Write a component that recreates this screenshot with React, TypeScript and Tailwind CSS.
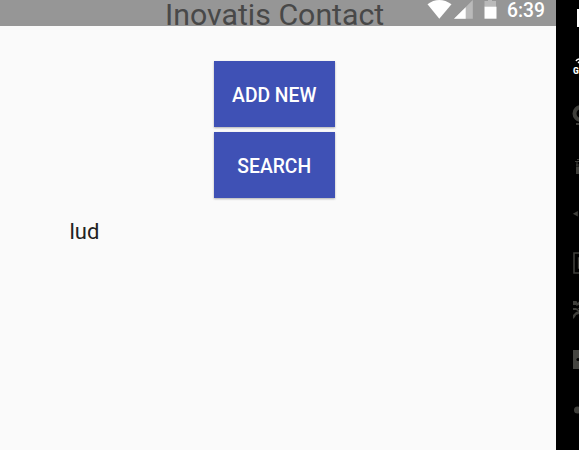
import type { ReactNode } from "react";

function ToolSlot({ children }: { children: ReactNode }) {
  return (
    <svg className="block h-[50px] w-[23px] shrink-0" viewBox="0 0 23 50" fill="none">
      {children}
    </svg>
  );
}

function EmulatorToolbar() {
  return (
    <aside className="flex h-full w-[23px] shrink-0 flex-col overflow-hidden bg-black">
      <ToolSlot>
        <path d="M21 9h6v18h-6z" fill="#fff" />
      </ToolSlot>
      <div className="flex h-[50px] w-[23px] shrink-0 flex-col overflow-hidden pl-[17px] pt-2">
        <svg className="h-[8px] w-[6px] shrink-0" viewBox="0 0 6 8" fill="none">
          <path d="M3 3q1-2 4-2M5 5l1.500-1.500" stroke="#fff" strokeWidth="1.4" />
        </svg>
        <span className="whitespace-nowrap text-[8.500px] font-black leading-[10px] text-white">G</span>
      </div>
      <ToolSlot>
        <circle cx="25" cy="13.500" r="6.500" stroke="#3f3f3b" strokeWidth="4" />
        <path d="M20 23h6v2h-6z" fill="#3f3f3b" />
      </ToolSlot>
      <ToolSlot>
        <path d="M19 11.500h4M20 15h3M21 11v5" stroke="#3f3f3b" strokeWidth="1.100" />
        <path d="M21 9h2v1h-2zM20 16.500h3v7.500h-3z" fill="#3f3f3b" />
      </ToolSlot>
      <ToolSlot>
        <path d="M16.800 13.800 21.800 11v5.500z" fill="#3f3f3b" />
      </ToolSlot>
      <ToolSlot>
        <path d="M18 3h14v20H18z" stroke="#3f3f3b" strokeWidth="1.600" />
        <path d="M22.500 8h6v10h-6z" stroke="#3f3f3b" strokeWidth="1.300" />
      </ToolSlot>
      <ToolSlot>
        <path d="M17 1h3.500L22 4l-2 1h-3zM23 1.500V5l-3 1 1.500-3zM17 8h3l3 2v2l-3-2h-3zM23 8v1h-2zM23 11v3l-3 1-1 2-2 2v-4l3-3z" fill="#3f3f3b" />
      </ToolSlot>
      <ToolSlot>
        <path d="M17 0h6v19h-6z" fill="#454541" />
        <circle cx="22" cy="9.500" r="1.600" fill="#000" />
      </ToolSlot>
      <ToolSlot>
        <circle cx="21.500" cy="10" r="3.500" fill="#3f3f3b" />
      </ToolSlot>
    </aside>
  );
}

function StatusIcons() {
  return (
    <svg className="mr-[10px] block h-[26px] w-[70px] shrink-0" viewBox="0 0 70 26">
      <path d="M0.500 4.300Q6 0 12.300 0T24.500 4.300L12.300 18.800z" fill="#fff" />
      <path d="M45.800 0v18.800H27z" fill="#bababa" />
      <path d="M38.700 7.200v11.600H27z" fill="#fff" />
      <path d="M61 0h4v1h4v6H57.500V1H61z" fill="#bababa" />
      <path d="M57.500 6.700H69.500v12H57.500z" fill="#fff" />
    </svg>
  );
}

function ActionButton({ label }: { label: string }) {
  return (
    <button className="flex h-[66px] w-[120.500px] items-center justify-center bg-[#3f51b5] pt-[3px] text-[19.300px] font-medium leading-none text-white shadow-[0_1px_2px_rgba(0,0,0,0.3)]">
      {label}
    </button>
  );
}

export default function App() {
  return (
    <div className="flex h-[450px] w-[579px] overflow-hidden bg-black font-['Roboto',sans-serif]">
      <main className="flex h-full w-[556px] shrink-0 flex-col bg-[#fafafa]">
        <header className="grid h-[26px] shrink-0 grid-cols-[165px_219px_1fr] bg-[#969696]">
          <h1 className="col-start-2 whitespace-nowrap text-[30.300px] leading-[30px] text-[#484848]">Inovatis Contact</h1>
          <div className="flex justify-end pr-[11px]">
            <StatusIcons />
            <span className="text-[19.300px] font-medium leading-[21px] text-white">6:39</span>
          </div>
        </header>
        <div className="flex flex-col gap-[5px] pl-[214px] pt-[35px]">
          <ActionButton label="ADD NEW" />
          <ActionButton label="SEARCH" />
        </div>
        <p className="pl-[69.500px] pt-[21px] text-[22px] leading-[26px] text-[#222]">lud</p>
      </main>
      <EmulatorToolbar />
    </div>
  );
}
